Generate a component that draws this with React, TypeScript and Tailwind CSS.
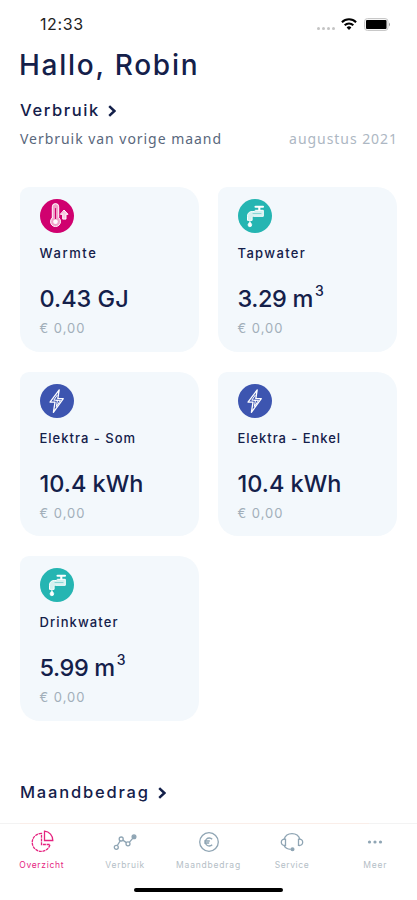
import type { ReactNode } from 'react';

type Kind = 'heat' | 'water' | 'power';

type Usage = {
  kind: Kind;
  label: string;
  labelClass: string;
  value: string;
  valueClass: string;
  cubic?: boolean;
};

const usages: Usage[] = [
  { kind: 'heat', label: 'Warmte', labelClass: 'tracking-[1.6px]', value: '0.43 GJ', valueClass: 'tracking-[0px]' },
  { kind: 'water', label: 'Tapwater', labelClass: 'tracking-[1.35px]', value: '3.29 m', valueClass: 'tracking-[-0.4px]', cubic: true },
  { kind: 'power', label: 'Elektra - Som', labelClass: 'tracking-[1px]', value: '10.4 kWh', valueClass: 'tracking-[0px]' },
  { kind: 'power', label: 'Elektra - Enkel', labelClass: 'tracking-[0.95px]', value: '10.4 kWh', valueClass: 'tracking-[0px]' },
  { kind: 'water', label: 'Drinkwater', labelClass: 'tracking-[1.1px]', value: '5.99 m', valueClass: 'tracking-[-0.4px]', cubic: true },
];

const circleColors: Record<Kind, string> = {
  heat: 'bg-[#d0016f]',
  water: 'bg-[#25b5b2]',
  power: 'bg-[#3d55b0]',
};

const UsageIcon = ({ kind }: { kind: Kind }) => (
  <div className={`size-[34px] rounded-full ${circleColors[kind]}`}>
    <svg viewBox="0 0 34 34" className="size-full" fill="none" stroke="white" strokeLinejoin="round" strokeLinecap="round">
      {kind === 'heat' && (
        <>
          <path d="M12.3 18.7V7.8a3.2 3.2 0 0 1 6.4 0v10.9a5 5 0 1 1-6.4 0Z" fill="#f0a4ca" strokeWidth="1" />
          <path d="M15.5 9.5v10" stroke="#d0016f" strokeWidth="1.1" />
          <circle cx="15.5" cy="22.8" r="2.3" fill="white" stroke="none" />
          <path d="M24.3 11.3 28 15.3h-2v4.8h-3.3v-4.8h-2Z" fill="#f8c9e0" strokeWidth="1" />
        </>
      )}
      {kind === 'water' && (
        <>
          <path d="M17.5 7.7h7.5M21.3 8v3.5" strokeWidth="2.1" />
          <path d="M9.5 21v-3.8c0-3 1.8-4.7 4.7-4.7h2l1.3-1.2h7.8v6H15.4c-.9 0-1.3.5-1.3 1.4V21Z" fill="#d5f1f0" strokeWidth="1" />
          <path d="M15 14.5h8" stroke="#72cfcd" strokeWidth="0.8" />
          <path d="M11.9 22.8c1.1 1.4 1.8 2.2 1.8 3.1a1.8 1.8 0 0 1-3.6 0c0-.9.7-1.7 1.8-3.1Z" fill="white" strokeWidth="0.8" />
        </>
      )}
      {kind === 'power' && (
        <>
          <path d="m19.2 5.9-9.2 12.2h5l-1.6 10.2 9.9-13.6h-5.5Z" strokeWidth="1.3" />
          <path d="m17.2 11.2-3.4 5h3.7l-1.2 6.4 4.2-6.2h-4" strokeWidth="1" />
        </>
      )}
    </svg>
  </div>
);

const UsageCard = ({ usage }: { usage: Usage }) => (
  <div className="rounded-[20px] rounded-tl-[9px] bg-[#f3f8fc] pt-3 pl-[19.5px]">
    <UsageIcon kind={usage.kind} />
    <p className={`mt-[10px] text-[13px] leading-5 font-medium whitespace-nowrap ${usage.labelClass}`}>{usage.label}</p>
    <p className={`mt-5 text-[23.5px] leading-8 font-medium whitespace-nowrap ${usage.valueClass}`}>
      {usage.value}
      {usage.cubic && <span className="relative -top-[11px] ml-[2px] text-[14px] leading-none">3</span>}
    </p>
    <p className="mt-[3px] text-[13px] leading-5 tracking-[1px] text-[#a2afba]">€ 0,00</p>
  </div>
);

const Chevron = () => (
  <svg viewBox="0 0 8 12" className="mt-[2px] h-3 w-2" fill="none" stroke="currentColor" strokeWidth="2.5">
    <path d="m1.2 1.2 5.2 4.8-5.2 4.8" />
  </svg>
);

type TabProps = { label: string; labelClass: string; active?: boolean; children: ReactNode };

const Tab = ({ label, labelClass, active, children }: TabProps) => (
  <div className={`flex flex-1 flex-col items-center ${active ? 'text-[#e5237f]' : 'text-[#8fa5b4]'}`}>
    <svg viewBox="0 0 24 24" className="size-6" fill="none" stroke="currentColor" strokeWidth="1.3">
      {children}
    </svg>
    <span className={`mt-[5px] text-[8.5px] leading-3 whitespace-nowrap ${labelClass} ${active ? '' : 'text-[#b4bec6]'}`}>
      {label}
    </span>
  </div>
);

const App = () => {
  return (
    <div className="flex h-[900px] w-[417px] flex-col overflow-hidden bg-white font-['Inter',sans-serif] text-[#14204a]">
      {/* Status bar */}
      <div className="flex h-12 justify-between pt-[14px] pr-[26px] pl-10 text-black">
        <span className="text-[16px] leading-5 tracking-[0.6px] text-[#222]">12:33</span>
        <div className="flex h-5 items-center">
          <div className="mt-[9px] flex gap-[2px]">
            <i className="size-[3px] rounded-full bg-[#c4c4c4]" />
            <i className="size-[3px] rounded-full bg-[#c4c4c4]" />
            <i className="size-[3px] rounded-full bg-[#c4c4c4]" />
            <i className="size-[3px] rounded-full bg-[#c4c4c4]" />
          </div>
          <svg viewBox="0 0 16 12" className="ml-[6px] h-3 w-4" fill="none" stroke="black" strokeWidth="2">
            <path d="M.9 4.3a10 10 0 0 1 14.2 0M3.7 7.2a6 6 0 0 1 8.6 0" />
            <path d="M8 12 5.6 9.5a3.4 3.4 0 0 1 4.8 0Z" fill="black" stroke="none" />
          </svg>
          <svg viewBox="0 0 27 13" className="ml-[7px] h-[13px] w-[27px]">
            <rect x="0.5" y="0.5" width="23.5" height="12" rx="3" fill="#f5f5f5" stroke="#c8c8c8" />
            <rect x="2" y="2" width="20.5" height="9" rx="1" fill="black" />
            <path d="M25 4.5q2 2 0 4Z" fill="#999" />
          </svg>
        </div>
      </div>

      {/* Header */}
      <header className="h-[139px] px-5">
        <h1 className="-ml-[1px] pt-[1px] text-[28px] leading-8 font-medium tracking-[1.75px] whitespace-nowrap">Hallo, Robin</h1>
        <div className="mt-[17px] flex h-6 items-center gap-2">
          <h2 className="text-[16.5px] leading-6 font-medium tracking-[1.6px]">Verbruik</h2>
          <Chevron />
        </div>
        <div className="mt-[7px] flex justify-between font-['Noto_Sans',sans-serif] text-[14px] leading-5 whitespace-nowrap">
          <span className="tracking-[0.96px] text-[#59677c]">Verbruik van vorige maand</span>
          <span className="-mr-[1px] tracking-[0.95px] text-[#adb7c3]">augustus 2021</span>
        </div>
      </header>

      {/* Usage cards */}
      <div className="grid grid-cols-2 auto-rows-[164.5px] gap-x-[19px] gap-y-5 px-5">
        {usages.map((usage) => (
          <UsageCard key={usage.label} usage={usage} />
        ))}
      </div>

      <div className="mt-[59px] flex h-6 items-center gap-2 px-5">
        <h2 className="text-[16.5px] leading-6 font-medium tracking-[1.8px]">Maandbedrag</h2>
        <Chevron />
      </div>

      {/* Tab bar */}
      <nav className="mt-auto flex h-[77px] flex-col items-center">
        <div className="flex h-px w-full">
          <div className="w-5 bg-[#f3f3f3]" />
          <div className="flex-1 bg-[#faeee9]" />
          <div className="w-12 bg-[#f3f3f3]" />
        </div>
        <div className="flex w-full pt-[6px]">
          <Tab label="Overzicht" labelClass="tracking-[0.7px]" active>
            <path d="M11.5 3.4A9 9 0 1 0 20 14.5h-8.5Z" strokeDasharray="3 0.7" />
            <path d="M14.5 1.2a9 9 0 0 1 8.3 9.3h-8.3Z" />
          </Tab>
          <Tab label="Verbruik" labelClass="tracking-[0.7px]">
            <circle cx="3.3" cy="17.3" r="2" />
            <circle cx="8.2" cy="9" r="2" />
            <circle cx="15" cy="13.8" r="2" />
            <circle cx="21" cy="6.8" r="1.9" fill="currentColor" />
            <path d="m4.3 15.5 2.9-4.7M9.8 10.1l3.6 2.5M16.3 12.3l3.4-4" />
          </Tab>
          <Tab label="Maandbedrag" labelClass="tracking-[0.8px]">
            <circle cx="12" cy="12" r="9.3" />
            <path d="M15.2 9.3a4 4 0 1 0 0 5.4M7.2 11h5.6M7.2 13h5" />
          </Tab>
          <Tab label="Service" labelClass="tracking-[0.6px]">
            <path d="M4 9.5a8.4 8.4 0 0 1 16 0M4 15.3c1.1 2.6 3.7 4 6.7 4" />
            <path d="M5.5 9.2v6.2c-2.5.4-4.2-.9-4.2-3.1s1.7-3.5 4.2-3.1ZM18.5 9.2v6.2c2.5.4 4.2-.9 4.2-3.1s-1.7-3.5-4.2-3.1Z" />
            <circle cx="12.5" cy="19.3" r="1.4" fill="currentColor" />
          </Tab>
          <Tab label="Meer" labelClass="tracking-[0.8px]">
            <g fill="currentColor" stroke="none">
              <circle cx="6.5" cy="12" r="1.6" />
              <circle cx="12" cy="12" r="1.6" />
              <circle cx="17.5" cy="12" r="1.6" />
            </g>
          </Tab>
        </div>
        <div className="mt-[17px] h-1 w-[149px] rounded-full bg-black" />
      </nav>
    </div>
  );
};

export default App;
